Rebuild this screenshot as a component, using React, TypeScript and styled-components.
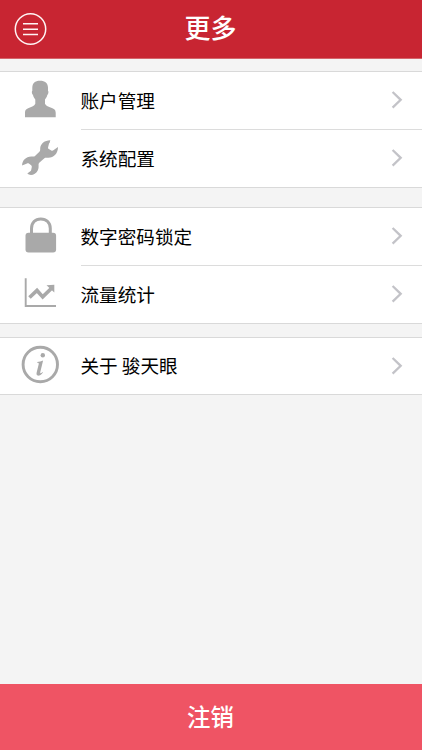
import React from "react";
import styled, { createGlobalStyle } from "styled-components";

const GlobalStyle = createGlobalStyle`
  * { box-sizing: border-box; }
  body { margin: 0; background: #f4f4f4; }
`;

const Screen = styled.main`
  display: flex;
  flex-direction: column;
  height: 750px;
  background: #f4f4f4;
  font-family: "Noto Sans CJK SC", sans-serif;
  overflow: hidden;
`;

const Header = styled.header`
  display: grid;
  grid-template-columns: 60px 1fr 60px;
  align-items: center;
  height: 59px;
  flex: none;
  background: #c82532;
  border-bottom: 1px solid #d4656b;
`;

const MenuButton = styled.button`
  display: block;
  width: 34px;
  height: 34px;
  margin: 0 0 0 14px;
  padding: 0;
  border: 0;
  background: none;
`;

const Title = styled.h1`
  margin: 0;
  padding: 0 1px 5px 0;
  color: #fff;
  text-align: center;
  font-size: 26px;
  line-height: 38px;
  font-weight: 500;
`;

const Groups = styled.div`
  flex: 1;
  padding-top: 12px;
`;

const Group = styled.section<{ $gap: number }>`
  margin-bottom: ${(p) => p.$gap}px;
  background: #fff;
  border-top: 1px solid #d9d9d9;
  border-bottom: 1px solid #d9d9d9;
`;

const Row = styled.div<{ $height: number }>`
  display: flex;
  height: ${(p) => p.$height}px;
`;

const IconCell = styled.div`
  flex: none;
  width: 81px;
  padding: 7px 0 0 20px;
`;

const RowBody = styled.div<{ $divided?: boolean }>`
  flex: 1;
  display: flex;
  align-items: center;
  justify-content: space-between;
  padding-right: 18px;
  border-bottom: ${(p) => (p.$divided ? "1px solid #dcdcdc" : "0")};
`;

const Label = styled.span`
  color: #000;
  font-size: 18.6px;
  line-height: 28px;
  padding-bottom: 2px;
  margin-left: -0.5px;
  white-space: pre;
`;

const LogoutButton = styled.button`
  flex: none;
  height: 66px;
  padding: 0 1px 0 0;
  border: 0;
  background: #ef5464;
  color: #fff;
  font-family: inherit;
  font-size: 23.4px;
  font-weight: 500;
  line-height: 64px;
  padding-bottom: 2px;
`;

const Glyph = styled.svg`
  display: block;
  width: 40px;
  height: 40px;
  color: #a9a9a9;
`;

const UserIcon = () => (
  <Glyph viewBox="0 0 40 40" fill="currentColor">
    <path d="M20 1.700c-5 0-7.700 2.600-7.700 7v3c-.8.5-.5 3.400.7 4.400.5 2 1.300 3.400 2.300 4.400v4.300c-1 2.400-3.500 3-6 3.900C6 29.900 5 31 5 34v4.200h30.700V34c0-3-1-4.100-4.500-5.300-2.500-.9-5.200-1.500-6.200-3.900v-4.300c1-1 1.800-2.400 2.300-4.400 1.200-1 1.500-3.900.7-4.400v-3c0-4.400-3-7-8-7z" />
  </Glyph>
);

const WrenchIcon = () => (
  <Glyph viewBox="0 0 40 40" fill="currentColor">
    <path d="M30.300 3.200C25 3.100 20.400 6.700 20.200 11.200c0 1.500.1 2.500-.8 3.500L15 19c-.9.800-2.100.4-3.700.4C5.800 19.600 2 23.500 2.100 28.600L7 26.400c.6-.3 1.300-.2 1.900.2l2.200 1.700c.6.500.8 1.100.7 1.800l-.6 3c-.1.700-.6 1.200-1.200 1.500l-2.700 1.900c1.600 1.700 4.800 2.100 7.500.2 2.800-1.900 4.100-4.500 3.800-8.200-.1-1.400 0-2 .9-3l4.900-4.300c1-.9 1.900-.5 3.400-.4 5.700.3 10.300-4.200 10.200-10.700l-4.600 3.200c-.7.5-1.400.5-2.100.1l-2.500-1.400c-.7-.4-.9-1-.7-1.800l.8-3.200c.1-.5.4-.9.8-1.200z" />
  </Glyph>
);

const LockIcon = () => (
  <Glyph viewBox="0 0 40 40" fill="currentColor">
    <path d="M11.500 20V13.500C11.500 7.800 15.200 3.900 20.800 3.900s9.500 3.900 9.500 9.600V20" fill="none" stroke="currentColor" strokeWidth="3" />
    <rect x="5.500" y="17.800" width="30.600" height="19.700" rx="3" />
  </Glyph>
);

const ChartIcon = () => (
  <Glyph viewBox="0 0 40 40" fill="none" stroke="currentColor">
    <path d="M5.700 5.200v27.800H36" strokeWidth="1.900" />
    <path d="M9.500 24.500 17 17.500l5.700 6.400 8.600-8.400" strokeWidth="3.700" />
    <path d="M26.500 12.300 34.300 11.800V19.500z" fill="currentColor" stroke="none" />
  </Glyph>
);

const InfoIcon = () => (
  <Glyph viewBox="0 0 40 40" fill="currentColor">
    <circle cx="20.300" cy="19.500" r="17.200" fill="none" stroke="currentColor" strokeWidth="2.900" />
    <circle cx="22.800" cy="10.300" r="2.200" />
    <path d="M17.200 17.100c2.100-.2 4-.8 5.900-1.500L20.300 27.100c-.4 1.700.3 1.700 2.100-.2l.5.500c-1.800 2.500-3.600 3.400-4.900 3.200-1.500-.2-1.700-1.500-1.300-3.400l2-8c.2-1-.2-1.400-1.500-1.400z" />
  </Glyph>
);

const Chevron = styled.svg`
  flex: none;
  width: 14px;
  height: 20px;
  margin-top: -1px;
`;

const MenuIcon = () => (
  <svg width="34" height="34" viewBox="0 0 34 34" fill="none" stroke="#fff4f4">
    <circle cx="16.500" cy="17" r="15.200" strokeWidth="1.500" />
    <path d="M9 11.800h15M9 17.200h15M9 22.500h15" strokeWidth="1.500" />
  </svg>
);

interface Item {
  label: string;
  Icon: React.ComponentType;
}

const groups: { gap: number; rowHeights: number[]; items: Item[] }[] = [
  {
    gap: 19,
    rowHeights: [58, 57],
    items: [
      { label: "账户管理", Icon: UserIcon },
      { label: "系统配置", Icon: WrenchIcon },
    ],
  },
  {
    gap: 13,
    rowHeights: [58, 57],
    items: [
      { label: "数字密码锁定", Icon: LockIcon },
      { label: "流量统计", Icon: ChartIcon },
    ],
  },
  { gap: 0, rowHeights: [56], items: [{ label: "关于 骏天眼", Icon: InfoIcon }] },
];

export default function App() {
  return (
    <Screen>
      <GlobalStyle />
      <Header>
        <MenuButton aria-label="菜单">
          <MenuIcon />
        </MenuButton>
        <Title>更多</Title>
      </Header>
      <Groups>
        {groups.map((group, g) => (
          <Group key={g} $gap={group.gap}>
            {group.items.map(({ label, Icon }, i) => (
              <Row key={label} $height={group.rowHeights[i]}>
                <IconCell>
                  <Icon />
                </IconCell>
                <RowBody $divided={i < group.items.length - 1}>
                  <Label>{label}</Label>
                  <Chevron viewBox="0 0 14 20" fill="none" stroke="#c3c3c8" strokeWidth="2.300">
                    <path d="M2.600 2 10.700 9.800l-8.100 7.800" />
                  </Chevron>
                </RowBody>
              </Row>
            ))}
          </Group>
        ))}
      </Groups>
      <LogoutButton>注销</LogoutButton>
    </Screen>
  );
}
